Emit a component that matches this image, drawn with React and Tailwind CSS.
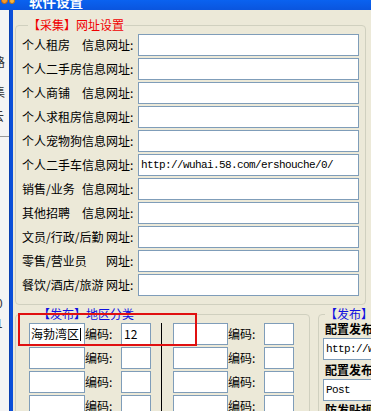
import React from 'react';

const CJK = "font-['Noto_Sans_CJK_SC',sans-serif]";

// label split in two parts so the tail ("信息网址:" / "网址:") starts where the original does
const URL_ROWS = [
  { left: '个人租房', right: '信息网址:', value: '' },
  { left: '个人二手房', right: '信息网址:', value: '' },
  { left: '个人商铺', right: '信息网址:', value: '' },
  { left: '个人求租房', right: '信息网址:', value: '' },
  { left: '个人宠物狗', right: '信息网址:', value: '' },
  { left: '个人二手车', right: '信息网址:', value: 'http://wuhai.58.com/ershouche/0/' },
  { left: '销售/业务', right: '信息网址:', value: '' },
  { left: '其他招聘', right: '信息网址:', value: '' },
  { left: '文员/行政/后勤', right: '网址:', value: '' },
  { left: '零售/营业员', right: '网址:', value: '' },
  { left: '餐饮/酒店/旅游', right: '网址:', value: '' },
];

function TextBox({ className = '', children }) {
  return (
    <div className={`h-[22px] shrink-0 border border-[#7F9DB9] bg-white flex items-center overflow-hidden whitespace-nowrap ${className}`}>
      {children}
    </div>
  );
}

function Mono({ children }) {
  return (
    <span className="font-['Liberation_Mono',monospace] text-[11px] tracking-[-0.6px] leading-none text-black">
      {children}
    </span>
  );
}

function AreaRow({ name, code }) {
  return (
    <div className="flex items-center h-[22px] mb-[2px]">
      <TextBox className="w-[56px] pl-[1px]">
        {name && (
          <>
            <span className="leading-none">{name}</span>
            <span className="w-px h-[13px] bg-black ml-[1px]" />
          </>
        )}
      </TextBox>
      <span className="w-[36px] shrink-0 leading-none">编码:</span>
      <TextBox className="w-[30px] pl-[2px]">
        {code && <span className="leading-none">{code}</span>}
      </TextBox>
    </div>
  );
}

function AreaRowB() {
  return (
    <div className="flex items-center h-[22px] mb-[2px]">
      <TextBox className="w-[55px]" />
      <span className="w-[36px] shrink-0 leading-none">编码:</span>
      <TextBox className="w-[30px]" />
    </div>
  );
}

export default function App() {
  return (
    <div className={`relative w-[371px] h-[411px] overflow-hidden bg-[#ECE9D8] text-[12px] text-black ${CJK}`}>
      {/* title bar (mostly scrolled off the top) */}
      <div className="h-[10px] bg-gradient-to-b from-[#0A62F0] to-[#0A55DE] flex items-start overflow-hidden">
        <div className="flex items-center pl-[1px] gap-[1px] -mt-[3px]">
          <span className="w-[7px] h-[7px] rounded-full bg-[#F59A2A] border border-[#C06010]" />
          <span className="w-[6px] h-[6px] rounded-full bg-[#F8B840] border border-[#C07010]" />
        </div>
        <span className="ml-[14px] -mt-[5px] text-white font-bold text-[13.5px] leading-[13px] whitespace-nowrap">软件设置</span>
      </div>

      <div className="flex h-[401px]">
        {/* window behind, on the left */}
        <div className="w-[9px] shrink-0 bg-[#F4F4F4] overflow-hidden flex flex-col text-[12px] leading-[12px] text-[#333]">
          <span className="mt-[46px] -ml-[7px]">路</span>
          <span className="mt-[18px] -ml-[7px]">集</span>
          <span className="mt-[12px] -ml-[8px]">云</span>
          <span className="mt-[14px] h-px w-full bg-[#999]" />
          <span className="mt-[160px] -ml-[4px]">0</span>
          <span className="mt-[8px] -ml-[4px]">1</span>
        </div>
        <div className="w-[4px] shrink-0 bg-[#0B4FD9] border-l border-[#0A3FB0]" />

        <div className="flex-1 min-w-0 overflow-hidden pl-[2px] flex flex-col">
          {/* 采集 group */}
          <fieldset className="mt-[9px] w-[351px] shrink-0 border border-[#D0D0BF] rounded-[4px] pl-[6px] pb-[6px]">
            <legend className="ml-[6px] text-[#F00000] leading-[12px]">【采集】网址设置</legend>
            <div className="pt-[3px]">
              {URL_ROWS.map((row) => (
                <div key={row.left} className="flex items-center h-[22px] mb-[2px]">
                  <div className="w-[116px] shrink-0 flex leading-none whitespace-nowrap">
                    <span className={row.right === '网址:' ? 'w-[84px] shrink-0' : 'w-[60px] shrink-0'}>{row.left}</span>
                    <span>{row.right}</span>
                  </div>
                  <TextBox className="w-[221px] pl-[2px]">
                    {row.value && <Mono>{row.value}</Mono>}
                  </TextBox>
                </div>
              ))}
            </div>
          </fieldset>

          <div className="flex mt-[3px] gap-[8px]">
            {/* 地区分类 group */}
            <fieldset className="w-[295px] h-[120px] shrink-0 border border-[#D0D0BF] rounded-[4px] pl-[13px]">
              <legend className="ml-[9px] text-[#1010E0] leading-[12px]">【发布】地区分类</legend>
              <div className="flex pt-[3px]">
                <div className="flex flex-col">
                  <AreaRow name="海勃湾区" code="12" />
                  <AreaRow />
                  <AreaRow />
                  <AreaRow />
                </div>
                <div className="w-px bg-black ml-[10px]" />
                <div className="flex flex-col ml-[11px]">
                  <AreaRowB />
                  <AreaRowB />
                  <AreaRowB />
                  <AreaRowB />
                </div>
              </div>
            </fieldset>

            {/* 发布 settings group */}
            <fieldset className="w-[120px] h-[120px] shrink-0 border border-[#D0D0BF] rounded-[4px]">
              <legend className="ml-[6px] text-[#1010E0] leading-[12px] whitespace-nowrap">【发布】设置</legend>
              <div className="pt-[3px] pl-[6px] whitespace-nowrap font-bold leading-[12px]">配置发布网址:</div>
              <TextBox className="ml-[4px] mt-[3px] w-[110px] pl-[2px]">
                <Mono>http://wuhai.58.com/</Mono>
              </TextBox>
              <div className="pl-[6px] mt-[4px] font-bold leading-[12px] whitespace-nowrap">配置发布方式:</div>
              <TextBox className="ml-[4px] mt-[3px] w-[110px] pl-[2px]">
                <Mono>Post</Mono>
              </TextBox>
              <div className="pl-[6px] mt-[3px] font-bold leading-[12px] whitespace-nowrap">防发贴规则:</div>
            </fieldset>
          </div>
        </div>
      </div>

      {/* red highlight drawn over the first area row */}
      <div className="absolute left-[18px] top-[313px] w-[179px] h-[33px] border-2 border-[#E01010]" />
    </div>
  );
}
